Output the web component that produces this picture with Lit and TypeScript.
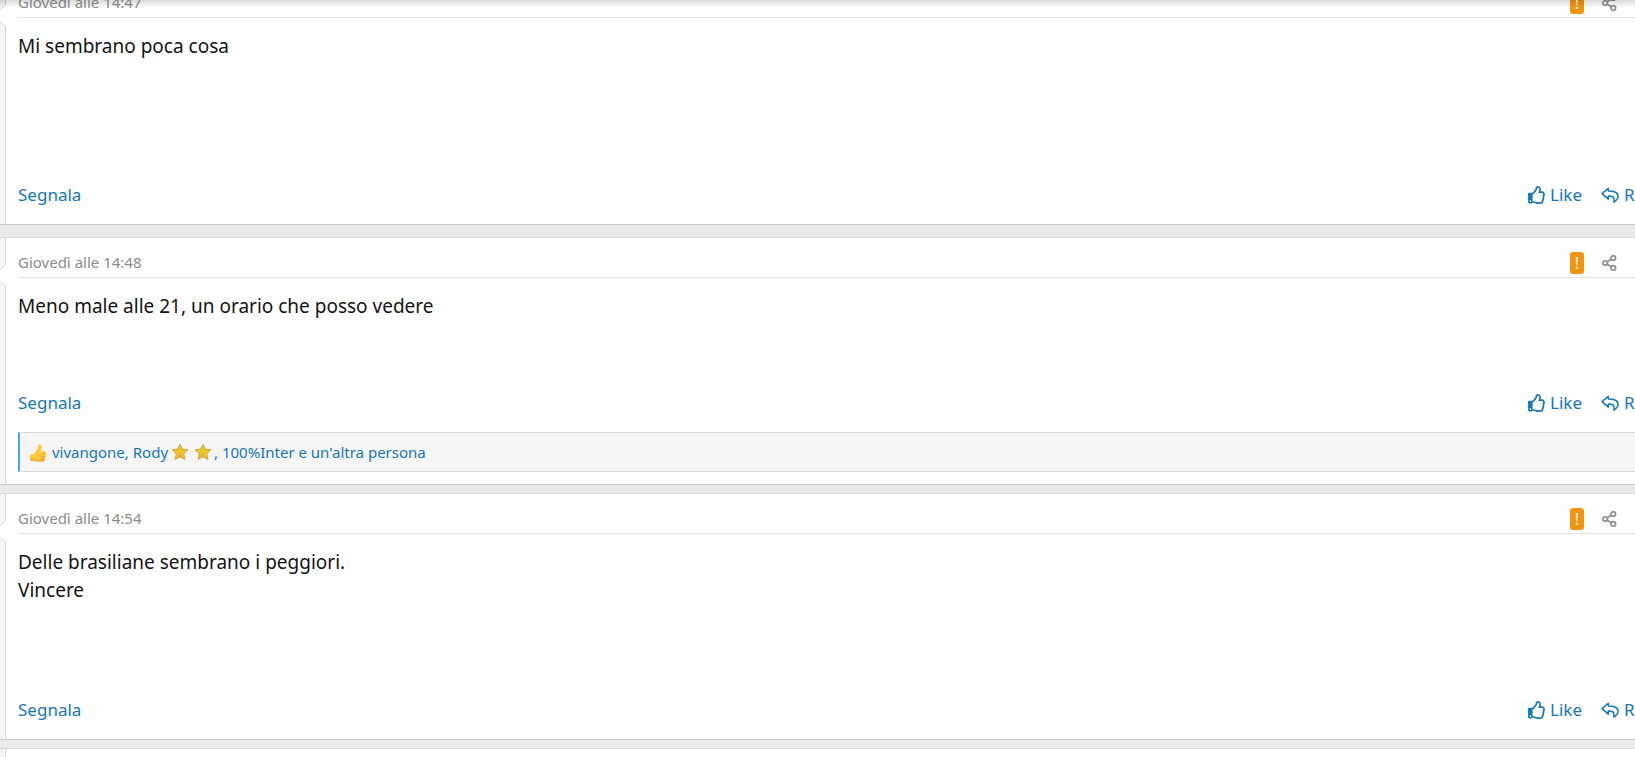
import { LitElement, html, css, svg, nothing } from "lit";
import { customElement, property } from "lit/decorators.js";

interface Post {
  time: string;
  lines: string[];
  bodyHeight: number;
  liked?: boolean;
  wideGap?: boolean;
}

const posts: Post[] = [
  { time: "Giovedì alle 14:47", lines: ["Mi sembrano poca cosa"], bodyHeight: 165, wideGap: true },
  { time: "Giovedì alle 14:48", lines: ["Meno male alle 21, un orario che posso vedere"], bodyHeight: 113, liked: true },
  { time: "Giovedì alle 14:54", lines: ["Delle brasiliane sembrano i peggiori.", "Vincere"], bodyHeight: 164 },
];

const thumbIcon = svg`<svg class="thumb" viewBox="0 0 480 512" aria-hidden="true"><path fill="currentColor" d="M466.27 286.69C475.04 271.84 480 256 480 236.85c0-44.015-37.218-85.58-85.82-85.58H357.7c4.92-12.81 8.85-28.13 8.85-46.54C366.55 31.936 328.86 0 271.28 0c-61.607 0-58.093 94.933-71.76 108.6-22.747 22.747-49.615 66.447-68.76 83.4H32c-17.673 0-32 14.327-32 32v240c0 17.673 14.327 32 32 32h64c14.893 0 27.408-10.174 30.978-23.95 44.509 1.001 75.06 39.94 177.802 39.94 7.22 0 15.22.01 22.22.01 77.117 0 111.986-39.423 112.94-95.33 13.319-18.425 20.299-43.122 17.34-66.99 9.854-18.452 13.664-40.343 8.99-62.99zm-61.75 53.83c12.56 21.13 1.26 49.41-13.94 57.57 7.7 48.78-17.608 65.9-53.12 65.9h-37.82c-71.639 0-118.029-37.82-171.64-37.82V240h10.92c28.36 0 67.98-70.89 94.54-97.46 28.36-28.36 18.91-75.63 37.82-94.54 47.27 0 47.27 32.98 47.27 56.73 0 39.17-28.36 56.72-28.36 94.54h103.99c21.11 0 37.73 18.91 37.82 37.82.09 18.9-12.82 37.81-22.27 37.81 13.489 14.555 16.371 45.236-5.21 65.62zM88 432c0 13.255-10.745 24-24 24s-24-10.745-24-24 10.745-24 24-24 24 10.745 24 24z"/></svg>`;

const replyIcon = svg`<svg class="reply" viewBox="0 0 18 18" aria-hidden="true"><path fill="none" stroke="currentColor" stroke-width="1.5" stroke-linejoin="round" d="M7.3 2.2 1 7.6l6.3 5.5V9.9c4.600 0 6.500 1.200 5.500 6.200 2.700-1.500 4.300-3.500 4.300-5.800 0-3.900-3.800-5.200-9.800-5.200z"/></svg>`;

const shareIcon = svg`<svg class="share-icon" viewBox="0 0 15 16" aria-hidden="true"><g fill="none" stroke="currentColor" stroke-width="1.600"><circle cx="3.200" cy="8" r="2.300"/><circle cx="11.300" cy="3.100" r="2.300"/><circle cx="11.300" cy="12.900" r="2.300"/><path d="m5.200 6.800 4.100-2.500M5.200 9.200l4.100 2.500"/></g></svg>`;

const starIcon = () => svg`<svg class="star" viewBox="0 0 18 18" role="img" aria-label="stella"><path fill="#edc52e" stroke="#c99a26" stroke-width=".8" stroke-linejoin="round" d="M9 1.200 11.300 6.100l5.700.7-4.200 3.800 1.200 5.900L9 13.700l-5 2.800 1.200-5.900L1 6.800l5.700-.7z"/><path fill="#d9a92a" d="M9 9.500 14 16.300 9 13.500 4 16.300z" opacity=".5"/></svg>`;

const likeEmoji = svg`<svg class="emoji" viewBox="0 0 18 20" role="img" aria-label="Like"><path fill="#ffc83d" d="M1 11.500c2.500.2 4.200-.4 5.600-2.600C7.700 7 9.200 6 9.300 2.600 9.400.5 12.600.7 12.700 4c.1 1.600-.6 2.800-.9 4.200h3.700c1.600 0 2 1.900.9 2.600 1.100.8 1 2.300-.1 2.800.8 1 .5 2.300-.6 2.700.5 1.100-.2 2.200-1.500 2.200H9c-3 0-3.500-1-8-1z"/><path fill="none" stroke="#e8962e" stroke-width=".9" d="M16.300 10.900h-4.500M16.100 13.700h-4.300M15.500 16.300h-3.700"/><path fill="#f19a35" d="M1 16c4 0 5.300 1.600 8.500 1.600h5.700c-.2.700-.7 1-1.500 1H9c-3 0-3.500-1-8-1z"/></svg>`;

@customElement("forum-post")
export class ForumPost extends LitElement {
  @property({ attribute: false }) post?: Post;

  static styles = css`
    :host {
      display: flex;
      border-top: 1px solid #d9d9d9;
      border-bottom: 1px solid #c8c8c8;
      background: #fefefe;
      overflow: hidden;
    }
    .user {
      flex: none;
      position: relative;
      width: 5px;
      background: #f5f5f5;
      border-right: 1px solid #d4d4d4;
    }
    .arrow {
      position: absolute;
      top: 26px;
      left: 0;
      width: 6px;
      height: 23px;
    }
    .main {
      flex: 1;
      min-width: 0;
      padding: 0 0 17px 12px;
    }
    .main.reacted {
      padding-bottom: 12px;
    }
    header {
      display: flex;
      align-items: center;
      height: 39px;
      padding: 0 18px 0 0;
      border-bottom: 1px solid #e3e3e3;
      color: #8c8c8c;
    }
    .time {
      flex: 1;
      padding-top: 9px;
      font-size: 15px;
      line-height: 20px;
    }
    a {
      color: inherit;
      text-decoration: none;
    }
    .badge {
      margin: 10px 18px 0 0;
      width: 14px;
      height: 22px;
      border-radius: 3px;
      background: #f2930d;
      color: #fff;
      font-size: 16px;
      line-height: 22px;
      text-align: center;
    }
    button {
      display: inline-flex;
      align-items: center;
      flex: none;
      gap: 5px;
      padding: 0;
      border: 0;
      background: none;
      color: inherit;
      font: inherit;
      white-space: nowrap;
    }
    .share {
      margin-top: 10px;
    }
    .share-icon {
      width: 15px;
      height: 16px;
    }
    .body {
      box-sizing: border-box;
      padding: 14px 0;
      color: #141414;
      font-size: 19px;
      line-height: 28px;
    }
    .line {
      margin: 0;
    }
    .actions {
      display: flex;
      height: 24px;
      color: #1577b8;
      font-size: 17px;
      line-height: 24px;
    }
    .report {
      flex: 1;
    }
    .like {
      margin-right: 19px;
    }
    .answer {
      width: 34px;
      overflow: hidden;
      justify-content: flex-start;
    }
    .thumb,
    .reply {
      flex: none;
      width: 18px;
      height: 18px;
    }
    .thumb {
      width: 17px;
    }
    .reactions {
      display: flex;
      align-items: center;
      box-sizing: border-box;
      height: 40px;
      margin-top: 17px;
      padding-left: 9px;
      border: 1px solid #dcdcdc;
      border-width: 1px 0;
      border-left: 2px solid #47a7eb;
      background: #f5f5f5;
      color: #1577b8;
      font-size: 15px;
      line-height: 20px;
    }
    .emoji {
      width: 18px;
      height: 20px;
      margin: 2px 5px 0 0;
    }
    .names {
      display: flex;
      align-items: center;
      white-space: pre;
    }
    .star {
      width: 18px;
      height: 18px;
      margin: 0 2px 0 3px;
    }
  `;

  render() {
    const p = this.post;
    return html`
      <div class="user">
        <svg class="arrow" viewBox="0 0 6 23" aria-hidden="true">
          <path fill="#fefefe" d="M6 0 0 6v11l6 6z" />
          <path fill="none" stroke="#d8d8d8" d="M5.500 0.500 0 6M0 17l5.500 5.500" />
        </svg>
      </div>
      ${p
        ? html`<div class="main ${p.liked ? "reacted" : ""}">
            <header>
              <a class="time" href="#post"><time>${p.time}</time></a>
              <span class="badge">!</span>
              <button class="share" aria-label="Condividi">${shareIcon}</button>
            </header>
            <div class="body" style="min-height:${p.bodyHeight}px">
              ${p.lines.map((line) => html`<p class="line">${line}</p>`)}
            </div>
            <div class="actions">
              <a class="report" href="#report">Segnala</a>
              <button class="like">${thumbIcon}Like</button>
              <button class="answer">${replyIcon}Reply</button>
            </div>
            ${p.liked
              ? html`<div class="reactions">
                  ${likeEmoji}<a class="names" href="#reactions"><span>vivangone, Rody</span>${starIcon()}${starIcon()}<span>, 100%Inter e un'altra persona</span></a>
                </div>`
              : nothing}
          </div>`
        : nothing}
    `;
  }
}

@customElement("app-root")
export class AppRoot extends LitElement {
  static styles = css`
    :host {
      display: block;
      position: relative;
      height: 100vh;
      overflow: hidden;
      background: #ebebeb;
      font-family: "Segoe UI", "Noto Sans", "Open Sans", sans-serif;
    }
    .thread {
      display: flex;
      flex-direction: column;
      gap: 8px;
      margin-top: -23px;
    }
    .wide-gap {
      margin-bottom: 4px;
    }
    .next {
      height: 200px;
    }
    .shade {
      position: absolute;
      inset: 0 0 auto;
      height: 8px;
      background: linear-gradient(rgba(0, 0, 0, 0.14), rgba(0, 0, 0, 0));
      pointer-events: none;
    }
  `;

  render() {
    return html`
      <main class="thread">
        ${posts.map((p) => html`<forum-post class=${p.wideGap ? "wide-gap" : ""} .post=${p}></forum-post>`)}
        <forum-post class="next"></forum-post>
      </main>
      <div class="shade"></div>
    `;
  }
}
